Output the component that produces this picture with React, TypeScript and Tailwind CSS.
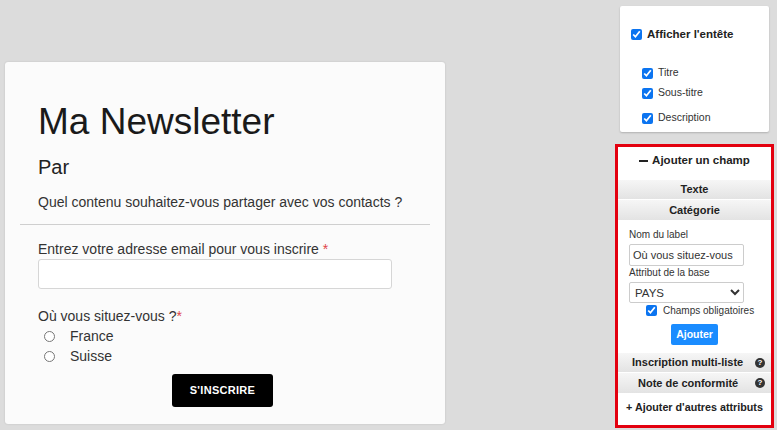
import React from 'react';

const font = { fontFamily: '"Liberation Sans", Arial, sans-serif' };

function Help() {
  return (
    <span className="inline-flex items-center justify-center w-[10px] h-[10px] rounded-full bg-[#333] text-white text-[8px] font-bold leading-none">
      ?
    </span>
  );
}

function Check({ label, bold }: { label: string; bold?: boolean }) {
  return (
    <label className={`flex items-center gap-[5px] whitespace-nowrap ${bold ? 'text-[11.5px] font-bold text-[#222]' : 'text-[10.5px] text-[#333]'}`}>
      <input type="checkbox" defaultChecked className="w-[11px] h-[11px] m-0 accent-[#0b74f0]" />
      {label}
    </label>
  );
}

export default function App() {
  return (
    <div className="w-[777px] h-[430px] bg-[#dcdcdc] flex overflow-hidden" style={font}>
      {/* Newsletter form */}
      <div className="ml-[5px] mt-[62px] w-[440px] h-[362px] bg-[#fbfbfb] rounded-[3px] shadow-[0_0_2px_rgba(0,0,0,0.15)] flex flex-col">
        <div className="px-[33px] pt-[38px]">
          <h1 className="text-[37px] leading-[44px] text-[#1a1a1a] whitespace-nowrap">Ma Newsletter</h1>
          <h2 className="text-[20px] leading-[24px] text-[#222] mt-[11px]">Par</h2>
          <p className="text-[14px] leading-[18px] text-[#333] mt-[14px] whitespace-nowrap">
            Quel contenu souhaitez-vous partager avec vos contacts ?
          </p>
        </div>
        <div className="mx-[15px] mt-[13px] border-t border-[#cfcfcf]" />
        <div className="px-[33px] pt-[15px] text-[#333]">
          <div className="text-[14px] leading-[18px] whitespace-nowrap">
            Entrez votre adresse email pour vous inscrire <span className="text-[#e0454a]">*</span>
          </div>
          <div className="mt-[1px] w-[354px] h-[30px] bg-white border border-[#d6d6d6] rounded-[3px]" />
          <div className="text-[14px] leading-[18px] mt-[18px]">
            Où vous situez-vous ?<span className="text-[#e0454a]">*</span>
          </div>
          <div className="mt-[2px] flex flex-col gap-[2px] text-[14px]">
            {['France', 'Suisse'].map((c) => (
              <label key={c} className="flex items-center h-[18px] pl-[6px]">
                <input type="radio" name="pays" className="w-[11px] h-[11px] m-0" />
                <span className="ml-[15px]">{c}</span>
              </label>
            ))}
          </div>
          <div className="flex justify-center mt-[9px]">
            <button className="w-[101px] h-[33px] bg-black text-white text-[11px] font-bold rounded-[3px] tracking-[0.3px] ml-[-5px]">
              S'INSCRIRE
            </button>
          </div>
        </div>
      </div>

      {/* Right column */}
      <div className="ml-auto mr-[3px] w-[159px] flex flex-col items-center">
        <div className="mt-[6px] w-[149px] h-[126px] bg-white rounded-[2px] shadow-[0_1px_2px_rgba(0,0,0,0.2)] pl-[11px] pt-[20px]">
          <Check label="Afficher l'entête" bold />
          <div className="pl-[11px] mt-[20px] flex flex-col">
            <div className="h-[20px] flex items-center"><Check label="Titre" /></div>
            <div className="h-[20px] flex items-center"><Check label="Sous-titre" /></div>
            <div className="h-[20px] flex items-center mt-[5px]"><Check label="Description" /></div>
          </div>
        </div>

        <div className="mt-[12px] w-[159px] h-[284px] border-[3px] border-[#e3000f] bg-white flex flex-col text-[#222]">
          <div className="h-[32px] pb-[5px] flex items-center justify-center text-[11.5px] font-bold whitespace-nowrap">
            <span className="inline-block w-[9px] h-[2px] bg-[#222] mr-[4px]" />
            Ajouter un champ
          </div>
          <div className="h-[21px] flex items-center justify-center text-[11px] font-bold bg-gradient-to-b from-[#f6f6f6] to-[#e3e3e3] border-y border-white">
            Texte
          </div>
          <div className="h-[21px] flex items-center justify-center text-[11px] font-bold bg-gradient-to-b from-[#f6f6f6] to-[#e3e3e3] border-b border-white">
            Catégorie
          </div>
          <div className="px-[11px] pt-[7px] text-[10px] text-[#333]">
            <div className="leading-[13px]">Nom du label</div>
            <div className="mt-[3px] w-[115px] h-[22px] border border-[#ccc] rounded-[2px] flex items-center px-[3px] text-[11px] whitespace-nowrap overflow-hidden">
              Où vous situez-vous
            </div>
            <div className="leading-[13px]">Attribut de la base</div>
            <select className="mt-[3px] w-[115px] h-[21px] border border-[#ccc] rounded-[2px] text-[11.5px] bg-white px-[1px]" defaultValue="PAYS">
              <option>PAYS</option>
            </select>
            <label className="flex items-center gap-[6px] ml-[17px] h-[14px] whitespace-nowrap">
              <input type="checkbox" defaultChecked className="w-[11px] h-[11px] m-0 accent-[#0b74f0]" />
              Champs obligatoires
            </label>
            <div className="flex justify-center mt-[7px]">
              <button className="w-[47px] h-[21px] bg-[#1a8cff] text-white text-[10.5px] font-bold rounded-[2px]">
                Ajouter
              </button>
            </div>
          </div>
          <div className="mt-[7px] h-[21px] flex items-center pl-[14px] pr-[6px] text-[11px] font-bold bg-gradient-to-b from-[#f6f6f6] to-[#e3e3e3] border-y border-white whitespace-nowrap">
            <span className="flex-1">Inscription multi-liste</span>
            <Help />
          </div>
          <div className="h-[21px] flex items-center pl-[20px] pr-[6px] text-[11px] font-bold bg-gradient-to-b from-[#f6f6f6] to-[#e3e3e3] border-b border-white whitespace-nowrap">
            <span className="flex-1">Note de conformité</span>
            <Help />
          </div>
          <div className="flex-1 pb-[5px] flex items-center justify-center text-[10.75px] font-bold whitespace-nowrap">
            + Ajouter d'autres attributs
          </div>
        </div>
      </div>
    </div>
  );
}
